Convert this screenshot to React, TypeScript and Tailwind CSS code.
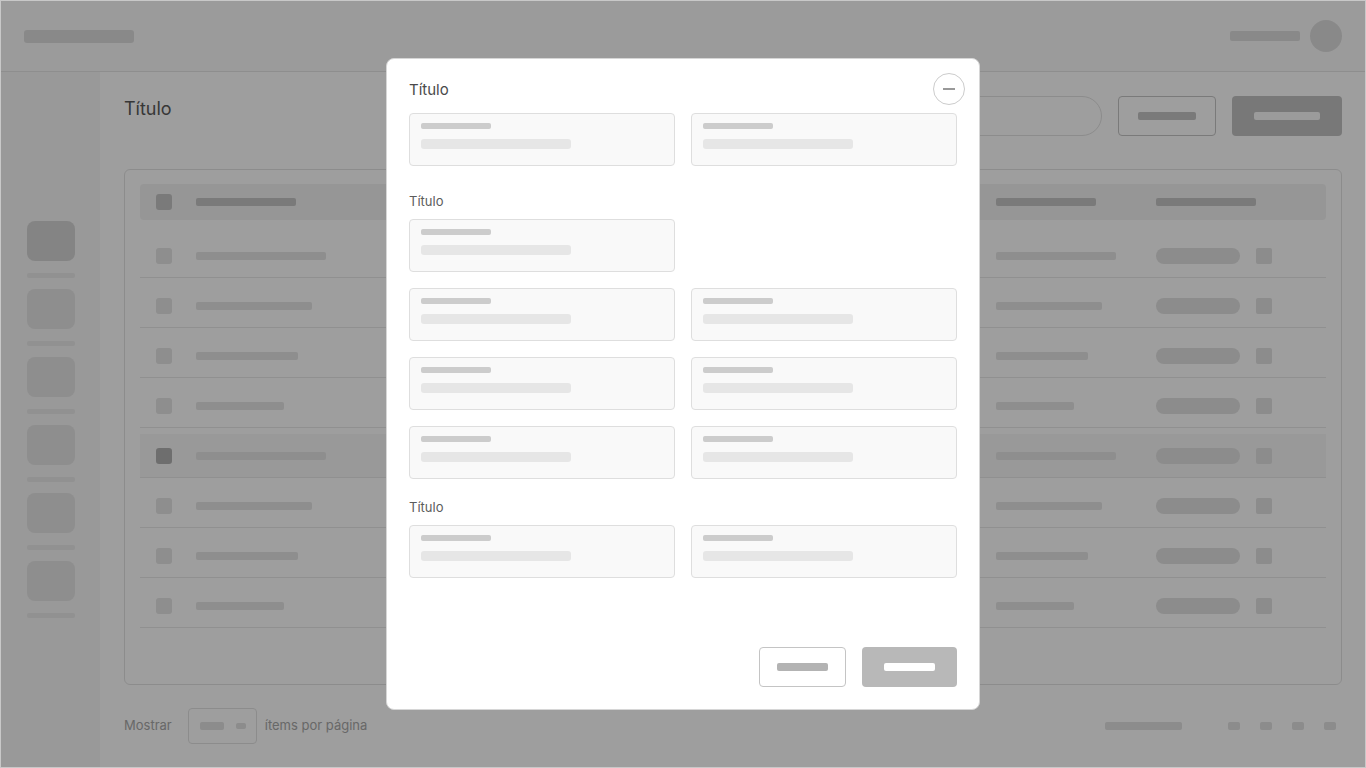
import React from 'react';

const rows = [
  { a: 'w-[130px]', b: 'w-[120px]' },
  { a: 'w-[116px]', b: 'w-[106px]' },
  { a: 'w-[102px]', b: 'w-[92px]' },
  { a: 'w-[88px]', b: 'w-[78px]' },
  { a: 'w-[130px]', b: 'w-[120px]', active: true },
  { a: 'w-[116px]', b: 'w-[106px]' },
  { a: 'w-[102px]', b: 'w-[92px]' },
  { a: 'w-[88px]', b: 'w-[78px]' },
];

const FieldCard = () => (
  <div className="h-[53px] rounded border border-[#dedede] bg-[#f9f9f9] px-[11px] pt-[9px]">
    <div className="h-[6px] w-[70px] rounded-[2px] bg-[#cccccc]" />
    <div className="mt-[10px] h-[10px] w-[150px] rounded-[3px] bg-[#e6e6e6]" />
  </div>
);

const Sidebar = () => (
  <aside className="flex w-[99px] flex-col items-center bg-[#f7f7f7] pt-[149px]">
    {[0, 1, 2, 3, 4, 5].map((i) => (
      <div key={i} className="flex flex-col items-center">
        <div className={`h-10 w-12 rounded-lg ${i === 0 ? 'bg-[#d6d6d6]' : 'bg-[#e5e5e5]'}`} />
        <div className="mb-[11px] mt-3 h-[5px] w-12 rounded-[2px] bg-[#eaeaea]" />
      </div>
    ))}
  </aside>
);

export default function App() {
  return (
    <div className="relative h-[768px] w-[1366px] overflow-hidden border border-[#c8c8c8] bg-white font-['Inter',sans-serif]">
      <div className="flex h-full flex-col">
        {/* Top bar */}
        <header className="flex h-[71px] items-center justify-between border-b border-[#e5e5e5] bg-[#fafafa] pl-[23px] pr-[23px]">
          <div className="h-[13px] w-[110px] rounded-[3px] bg-[#dedede]" />
          <div className="flex items-center gap-[10px]">
            <div className="h-[10px] w-[70px] rounded-[2px] bg-[#dedede]" />
            <div className="h-8 w-8 rounded-full bg-[#dedede]" />
          </div>
        </header>

        <div className="flex flex-1">
          <Sidebar />

          <main className="flex-1 pl-6 pr-[23px] pt-6">
            <div className="flex h-10 items-start justify-between">
              <h1 className="text-[18px] leading-[26px] text-[#5a5a5a]">Título</h1>
              <div className="flex items-center gap-4">
                <div className="h-10 w-[240px] rounded-full border border-[#e2e2e2]" />
                <div className="flex h-10 w-[98px] items-center justify-center rounded border border-[#c5c5c5]">
                  <div className="h-2 w-[58px] rounded-[2px] bg-[#c5c5c5]" />
                </div>
                <div className="flex h-10 w-[110px] items-center justify-center rounded bg-[#c2c2c2]">
                  <div className="h-2 w-[66px] rounded-[2px] bg-[#fafafa]" />
                </div>
              </div>
            </div>

            {/* Table */}
            <div className="mt-[33px] h-[516px] rounded-md border border-[#e3e3e3] px-[15px] pt-[14px]">
              <div className="flex h-9 items-center rounded bg-[#f2f2f2] pl-4">
                <div className="h-4 w-4 rounded-[3px] bg-[#c5c5c5]" />
                <div className="ml-6 w-[400px]"><div className="h-2 w-[100px] rounded-[2px] bg-[#c5c5c5]" /></div>
                <div className="w-[400px]"><div className="h-2 w-[100px] rounded-[2px] bg-[#c5c5c5]" /></div>
                <div className="w-[160px]"><div className="h-2 w-[100px] rounded-[2px] bg-[#c5c5c5]" /></div>
                <div className="flex-1"><div className="h-2 w-[100px] rounded-[2px] bg-[#c5c5c5]" /></div>
              </div>
              <div className="flex flex-col gap-[6px] pt-[14px]">
                {rows.map((r, i) => (
                  <div
                    key={i}
                    className={`flex h-[44px] items-center border-b border-[#e8e8e8] pl-4 ${r.active ? 'bg-[#f7f7f7]' : ''}`}
                  >
                    <div className={`h-4 w-4 rounded-[3px] ${r.active ? 'bg-[#b2b2b2]' : 'bg-[#e5e5e5]'}`} />
                    <div className="ml-6 w-[400px]"><div className={`h-2 rounded-[2px] bg-[#e5e5e5] ${r.a}`} /></div>
                    <div className="w-[400px]"><div className={`h-2 rounded-[2px] bg-[#e5e5e5] ${r.b}`} /></div>
                    <div className="w-[160px]"><div className={`h-2 rounded-[2px] bg-[#e5e5e5] ${r.b}`} /></div>
                    <div className="flex flex-1 items-center">
                      <div className="h-4 w-[84px] rounded-full bg-[#e2e2e2]" />
                      <div className="ml-4 h-4 w-4 rounded-[2px] bg-[#e2e2e2]" />
                    </div>
                  </div>
                ))}
              </div>
            </div>

            {/* Pagination */}
            <div className="mt-[23px] flex h-9 items-center justify-between">
              <div className="flex items-center text-[13px] text-[#a8a8a8]">
                <span>Mostrar</span>
                <div className="ml-4 mr-2 flex h-9 w-[69px] items-center rounded border border-[#e2e2e2] pl-[11px]">
                  <div className="h-2 w-6 rounded-[2px] bg-[#e2e2e2]" />
                  <div className="ml-3 h-[6px] w-[10px] rounded-[2px] bg-[#e2e2e2]" />
                </div>
                <span>ítems por página</span>
              </div>
              <div className="flex items-center pr-[6px]">
                <div className="mr-[46px] h-2 w-[77px] rounded-[2px] bg-[#e2e2e2]" />
                <div className="flex gap-5">
                  {[0, 1, 2, 3].map((i) => (
                    <div key={i} className="h-2 w-3 rounded-[2px] bg-[#e2e2e2]" />
                  ))}
                </div>
              </div>
            </div>
          </main>
        </div>
      </div>

      {/* Modal */}
      <div className="absolute inset-0 flex items-center justify-center bg-[rgba(0,0,0,0.38)]">
        <div className="flex h-[652px] w-[594px] flex-col rounded-lg border border-[#d6d6d6] bg-white px-[22px] pb-[22px] pt-[14px]">
          <div className="flex h-8 items-center justify-between">
            <h2 className="pt-[3px] text-[15px] text-[#4a4a4a]">Título</h2>
            <button className="-mr-2 flex h-8 w-8 items-center justify-center rounded-full border border-[#cccccc]">
              <span className="h-[2px] w-3 bg-[#999999]" />
            </button>
          </div>

          <div className="mt-2 grid grid-cols-2 gap-4">
            <FieldCard />
            <FieldCard />
          </div>

          <p className="mb-[9px] mt-[26px] text-[13px] leading-[18px] text-[#5c5c5c]">Título</p>
          <div className="grid grid-cols-2 gap-4">
            <FieldCard />
          </div>
          <div className="mt-4 grid grid-cols-2 gap-4">
            <FieldCard />
            <FieldCard />
            <FieldCard />
            <FieldCard />
            <FieldCard />
            <FieldCard />
          </div>

          <p className="mb-[9px] mt-[19px] text-[13px] leading-[18px] text-[#5c5c5c]">Título</p>
          <div className="grid grid-cols-2 gap-4">
            <FieldCard />
            <FieldCard />
          </div>

          <div className="mt-auto flex justify-end gap-4">
            <button className="flex h-10 w-[87px] items-center justify-center rounded border border-[#c4c4c4]">
              <span className="h-2 w-[51px] rounded-[2px] bg-[#b3b3b3]" />
            </button>
            <button className="flex h-10 w-[95px] items-center justify-center rounded bg-[#b8b8b8]">
              <span className="h-2 w-[51px] rounded-[2px] bg-white" />
            </button>
          </div>
        </div>
      </div>
    </div>
  );
}
